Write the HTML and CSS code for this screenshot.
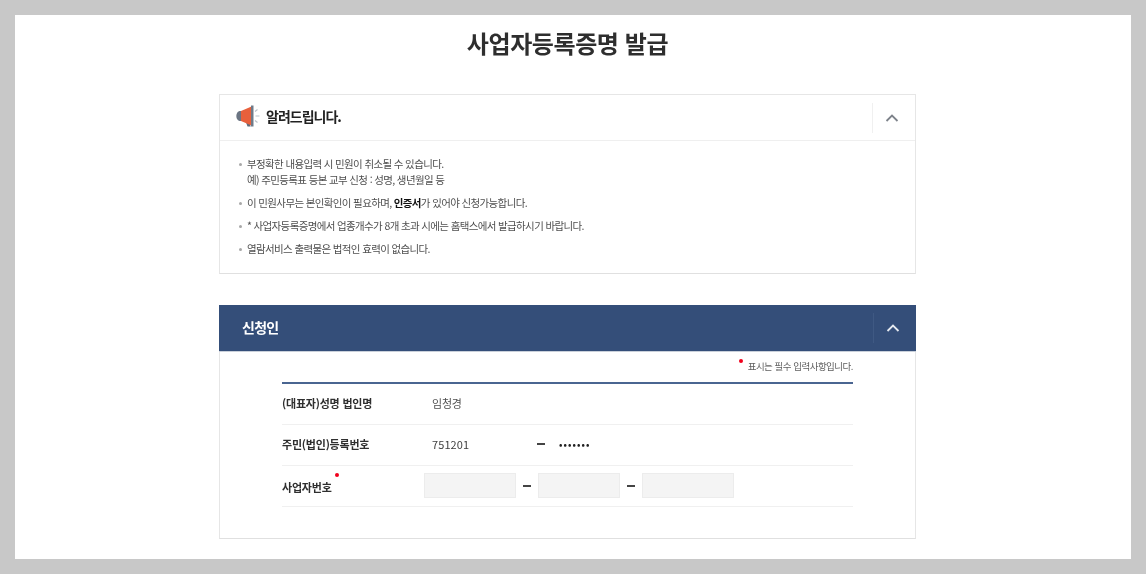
FILE: index.html
```html
<!DOCTYPE html>
<html lang="ko">
<head>
<meta charset="utf-8">
<title>사업자등록증명 발급</title>
<link rel="stylesheet" href="styles.css">
</head>
<body>
<main class="sheet">
  <h1 class="title">사업자등록증명 발급</h1>

  <section class="panel notice">
    <header class="panel-head">
      <div class="head-label">
        <svg class="horn" width="24" height="24" viewBox="0 0 24 24" aria-hidden="true">
          <path d="M6 16l3-.5 2.500 7h3.200l-2-7z" fill="#5f6b7a"/>
          <path d="M3.500 7C1.200 7.500 .3 10 .3 12s.9 4.500 3.200 5h2.500V7z" fill="#6b7583"/>
          <path d="M5 7 15.500 2.500v19L5 17z" fill="#e8603c"/>
          <path d="M15 1.500h2.500v21H15z" fill="#6f7a88"/>
          <path d="M19.500 12h4M19 7.500l2.500-2M19 16.500l2.500 2" stroke="#b9c1ca" stroke-width="1.200" fill="none"/>
        </svg>
        <span class="notice-title">알려드립니다.</span>
      </div>
      <div class="toggle">
        <svg width="14" height="8" viewBox="0 0 14 8" aria-hidden="true"><path d="M1.500 7 7 1.500 12.500 7" fill="none" stroke="#7d828a" stroke-width="1.800"/></svg>
      </div>
    </header>
    <ul class="notice-list">
      <li>부정확한 내용입력 시 민원이 취소될 수 있습니다.<br>예) 주민등록표 등본 교부 신청 : 성명, 생년월일 등</li>
      <li>이 민원사무는 본인확인이 필요하며, <b>인증서</b>가 있어야 신청가능합니다.</li>
      <li>* 사업자등록증명에서 업종개수가 8개 초과 시에는 홈택스에서 발급하시기 바랍니다.</li>
      <li>열람서비스 출력물은 법적인 효력이 없습니다.</li>
    </ul>
  </section>

  <section class="panel applicant">
    <header class="panel-head navy">
      <div class="head-label"><span class="applicant-title">신청인</span></div>
      <div class="toggle">
        <svg width="14" height="8" viewBox="0 0 14 8" aria-hidden="true"><path d="M1.500 7 7 1.500 12.500 7" fill="none" stroke="#e6eaf0" stroke-width="1.800"/></svg>
      </div>
    </header>
    <div class="form-wrap">
      <p class="required-note"><i class="dot note-dot"></i>표시는 필수 입력사항입니다.</p>
      <div class="form">
        <div class="row">
          <div class="label">(대표자)성명 법인명</div>
          <div class="value name">임청경</div>
        </div>
        <div class="row">
          <div class="label">주민(법인)등록번호</div>
          <div class="value id">
            <span class="id-front">751201</span>
            <span class="id-dash"></span>
            <span class="id-back">•••••••</span>
          </div>
        </div>
        <div class="row last">
          <div class="label">사업자번호<i class="dot label-dot"></i></div>
          <div class="value inputs">
            <input class="box" type="text" aria-label="사업자번호 앞자리">
            <span class="dash"></span>
            <input class="box" type="text" aria-label="사업자번호 가운데자리">
            <span class="dash"></span>
            <input class="box" type="text" aria-label="사업자번호 끝자리">
          </div>
        </div>
      </div>
    </div>
  </section>
</main>
</body>
</html>
```
FILE: styles.css
```css
* { box-sizing: border-box; }
html, body { height: 100%; }
body {
  margin: 0;
  padding: 15px;
  background: #c8c8c8;
  font-family: "Noto Sans CJK KR", "Noto Sans", sans-serif;
  color: #333;
  overflow: hidden;
}
.sheet {
  height: 544px;
  padding-right: 11px;
  background: #fff;
  display: flex;
  flex-direction: column;
  align-items: center;
  overflow: hidden;
}
.title {
  margin: 10px 0 1px 0;
  height: 36px;
  font-size: 24px;
  line-height: 36px;
  font-weight: 700;
  letter-spacing: -0.4px;
  color: #2e2e2e;
  filter: blur(0.6px);
}
.panel {
  width: 697px;
  border: 1px solid #e6e6e6;
  border-bottom-color: #e0e0e0;
  background: #fff;
  filter: blur(0.7px);
}
.notice { margin-top: 32px; height: 180px; }
.applicant { margin-top: 31px; height: 234px; }
.panel-head {
  height: 46px;
  display: flex;
  align-items: center;
  justify-content: space-between;
  border-bottom: 1px solid #efefef;
}
.navy {
  height: 47px;
  margin: -1px -1px 0;
  background: #344e79;
  border: 0;
  border-bottom: 1px solid #c9d0da;
}
.head-label { display: flex; align-items: center; padding: 0 0 3px 16px; }
.horn { margin-right: 6px; }
.notice-title {
  font-size: 14px;
  font-weight: 700;
  letter-spacing: -1px;
  color: #222;
}
.applicant-title {
  padding-left: 7px;
  font-size: 14px;
  font-weight: 700;
  letter-spacing: -0.7px;
  color: #fff;
}
.toggle {
  width: 43px;
  height: 30px;
  padding-right: 4px;
  display: flex;
  align-items: center;
  justify-content: center;
  border-left: 1px solid #f0f0f0;
}
.navy .toggle { border-left-color: #3f5983; }
.notice-list {
  list-style: none;
  margin: 0;
  padding: 15px 20px 0 19px;
  font-size: 10.500px;
  line-height: 16px;
  letter-spacing: -0.64px;
  color: #4f4f4f;
}
.notice-list li {
  position: relative;
  padding-left: 8px;
  margin-bottom: 7px;
}
.notice-list li::before {
  content: "";
  position: absolute;
  left: 0;
  top: 7px;
  width: 3px;
  height: 3px;
  border-radius: 50%;
  background: #a8a8a8;
}
.notice-list b { color: #111; font-weight: 700; }
.form-wrap { padding: 0 62px; }
.required-note {
  margin: 0;
  height: 30px;
  padding-top: 6px;
  text-align: right;
  font-size: 9.500px;
  line-height: 16px;
  letter-spacing: -0.5px;
  color: #5f5f5f;
}
.dot {
  display: inline-block;
  width: 4px;
  height: 4px;
  border-radius: 50%;
  background: #f0001c;
  vertical-align: top;
}
.note-dot { margin: 1px 5px 0 0; }
.label-dot { margin: -6px 0 0 3px; }
.form { border-top: 2px solid #4a6591; }
.row {
  display: flex;
  align-items: center;
  height: 41px;
  padding-bottom: 2px;
  border-bottom: 1px solid #f0f0f0;
  font-size: 11px;
  letter-spacing: -0.2px;
}
.row.last { padding-bottom: 0; }
.label {
  width: 150px;
  font-weight: 700;
  color: #2f2f2f;
}
.last .label { padding-top: 1px; }
.value { color: #4f4f4f; display: flex; align-items: center; }
.id-front { width: 105px; color: #3f3f3f; font-size: 11px; letter-spacing: 0.1px; }
.id-dash, .dash {
  display: block;
  height: 2px;
  width: 8px;
  background: #444;
}
.id-back { margin-left: 14px; font-size: 9px; font-weight: 700; letter-spacing: 1.100px; color: #222; }
.inputs { margin: 0 0 1px -8px; }
.box {
  width: 92px;
  height: 25px;
  padding: 0;
  background: #f4f4f4;
  border: 1px solid #ececec;
  border-radius: 0;
  outline: 0;
}
.dash { margin: 0 7px; width: 8px; }
.inputs .box:nth-of-type(2) { width: 82px; }
```
